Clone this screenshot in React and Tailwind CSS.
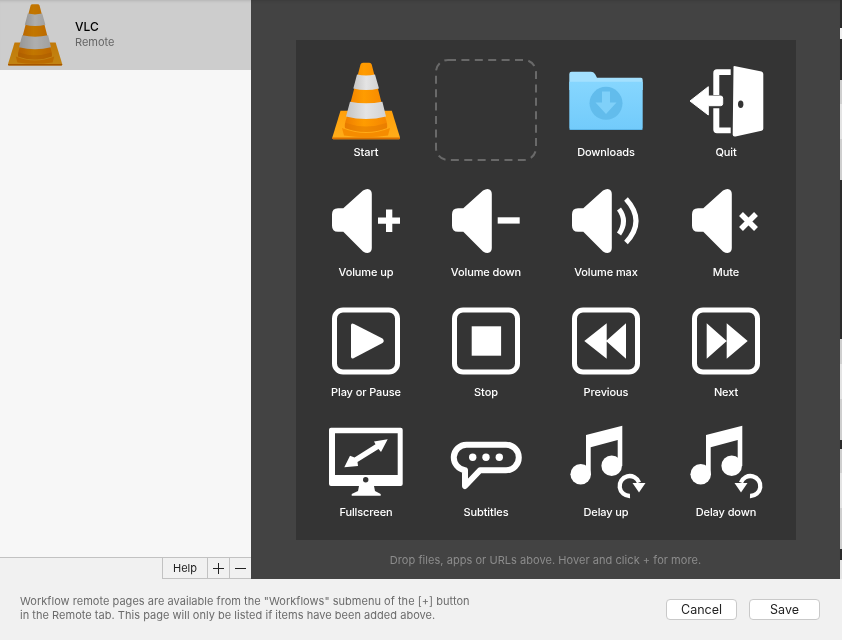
// App.jsx
import { useId } from "react";

const FONT = "font-['Inter','Liberation_Sans',sans-serif]";

// stray pixels of the window behind, visible down the right edge
const EDGE = [
    [28, "#2a2a2a"], [11, "#f0f0f0"], [41, "#2a2a2a"], [24, "#cfcfcf"], [35, "#e4e4e4"],
    [41, "#cfcfcf"], [160, "#2a2a2a"], [25, "#cfcfcf"], [35, "#e4e4e4"], [41, "#cfcfcf"],
    [9, "#2a2a2a"], [24, "#cfcfcf"], [35, "#e4e4e4"], [41, "#cfcfcf"], [11, "#2a2a2a"], [19, "#e4e4e4"],
];

function Cone({ className }) {
    const id = useId();
    return (
        <svg viewBox="0 0 80 80" className={className}>
            <defs>
                <linearGradient id={`${id}o`} x1="0" x2="1" y1="0" y2="0">
                    <stop offset="0" stopColor="#ee7d00" />
                    <stop offset="0.45" stopColor="#ff9c00" />
                    <stop offset="1" stopColor="#f58500" />
                </linearGradient>
                <linearGradient id={`${id}w`} x1="0" x2="1" y1="0" y2="0">
                    <stop offset="0" stopColor="#c4c4c4" />
                    <stop offset="0.5" stopColor="#e4e4e4" />
                    <stop offset="1" stopColor="#d2d2d2" />
                </linearGradient>
                <linearGradient id={`${id}p`} x1="0" x2="0" y1="0" y2="1">
                    <stop offset="0" stopColor="#ff9f0a" />
                    <stop offset="1" stopColor="#ffae1a" />
                </linearGradient>
            </defs>
            <path d="M14.5 50.7H65.8L74 77.5V78.3Q74 79.3 73 79.3H7.3Q6.3 79.3 6.3 78.3V77.5Z" fill={`url(#${id}p)`} />
            <path d="M6.3 77.6H74V78.3Q74 79.3 73 79.3H7.3Q6.3 79.3 6.3 78.3Z" fill="#d96f00" />
            <path d="M16 68Q40 78 64 68L62 75.5Q40 79 18 75.5Z" fill="#f58c00" />
            <path d="M34.5 4.5Q35 2.7 37 2.7H43.2Q45.2 2.7 45.7 4.5L59.5 58Q62 65 61 68Q40 76 19 68Q18 65 20.5 58Z" fill={`url(#${id}o)`} />
            <path d="M31 14.5Q40 16.5 49 14.5L53 28.5Q40 31.5 27.3 28.5Z" fill={`url(#${id}w)`} />
            <path d="M24 41.7Q40 45 56.4 41.7L60 56.5Q40 61.5 20 56.5Z" fill={`url(#${id}w)`} />
            <path d="M19.5 63Q40 70 60.5 63L61 68Q40 76 19 68Z" fill="#e07800" opacity="0.5" />
        </svg>
    );
}

function Folder() {
    const id = useId();
    return (
        <svg viewBox="0 0 80 80" className="size-20">
            <defs>
                <linearGradient id={id} x1="0" x2="0" y1="0" y2="1">
                    <stop offset="0" stopColor="#86d6fe" />
                    <stop offset="1" stopColor="#72cbfb" />
                </linearGradient>
            </defs>
            <path d="M3.3 14Q3.3 11.7 5.6 11.7H25Q27.5 11.7 29 14L31 17.7H75Q76.7 17.7 76.7 20V30H3.3Z" fill="#a3e0fe" />
            <path d="M3.3 21.7H76.7V68Q76.7 70 74.7 70H5.3Q3.3 70 3.3 68Z" fill={`url(#${id})`} />
            <path d="M3.3 69H76.7Q76.7 70 74.7 70H5.3Q3.3 70 3.3 69Z" fill="#5cb4e6" />
            <circle cx="40" cy="43.3" r="16.5" fill="#62bcec" />
            <path d="M36 31.5H44V42.5H50.5L40 54 29.5 42.5H36Z" fill="#7fd0f9" />
        </svg>
    );
}

function Glyph({ children }) {
    return (
        <svg viewBox="0 0 80 80" className="size-20 text-white" fill="currentColor">
            {children}
        </svg>
    );
}

const Speaker = () => (
    <path d="M12 28.3H17.3L37 10.5Q39.5 9 41.5 9Q45.8 9.5 45.8 14V68Q45.8 72.5 41.5 73Q39.5 73 37 71.5L17.3 51.7H12Q6 51.7 6 45.7V34.3Q6 28.3 12 28.3Z" />
);

const Frame = () => (
    <rect x="8.5" y="10" width="63" height="62" rx="8.5" fill="none" stroke="currentColor" strokeWidth="5" />
);

const Notes = () => (
    <>
        <path d="M20 15L56.3 5.7V46H51.7V20L24.7 27.3V55H20Z" />
        <circle cx="14.7" cy="54.3" r="10.3" />
        <circle cx="45.7" cy="45.7" r="10.3" />
    </>
);

function DropSlot() {
    return (
        <div className="h-[120px] pt-[19px] flex justify-center">
            <svg viewBox="0 0 102 102" className="w-[102px] h-[102px]">
                <rect x="1" y="1" width="100" height="100" rx="12" fill="none" stroke="#696969" strokeWidth="2" strokeDasharray="8 5.4" />
            </svg>
        </div>
    );
}

function Item({ label, children }) {
    return (
        <div className="h-[120px] pt-5 flex flex-col items-center">
            {children}
            <span className="mt-[5px] text-[11px] leading-[14px] font-medium tracking-[-0.1px] text-white">{label}</span>
        </div>
    );
}

export default function App() {
    return (
        <div className={`${FONT} w-[842px] h-[640px] flex flex-col bg-[#f1f1f1] overflow-hidden`}>
            <div className="h-[579px] flex">
                {/* left list */}
                <div className="w-[251px] flex flex-col bg-[#f7f7f7]">
                    <div className="h-[70px] flex items-center bg-[#cdcdcd] shadow-[inset_0_3px_3px_-2px_rgba(0,0,0,0.12)]">
                        <Cone className="ml-[3px] mb-[2px] size-16 mix-blend-multiply brightness-95" />
                        <div className="ml-2 mb-[2px] flex flex-col">
                            <span className="text-[12px] leading-[16px] font-medium text-black">VLC</span>
                            <span className="text-[11px] leading-[14px] text-[#666]">Remote</span>
                        </div>
                    </div>
                    <div className="flex-1" />
                    <div className="h-[22px] flex justify-end border-t border-[#c2c2c2] bg-[#f1f1f1]">
                        <div className="flex border-b border-l border-[#c2c2c2] text-[#222]">
                            <span className="w-[45px] text-center text-[11px] leading-[20px] border-r border-[#c2c2c2]">Help</span>
                            <span className="w-[22px] flex items-center justify-center border-r border-[#c2c2c2]">
                                <svg viewBox="0 0 11 11" className="w-[11px] h-[11px]" stroke="#222" strokeWidth="1" shapeRendering="crispEdges"><path d="M5.5 0V11M0 5.5H11" /></svg>
                            </span>
                            <span className="w-[21px] flex items-center justify-center">
                                <svg viewBox="0 0 11 11" className="w-[11px] h-[11px]" stroke="#222" strokeWidth="1" shapeRendering="crispEdges"><path d="M0 5.5H11" /></svg>
                            </span>
                        </div>
                    </div>
                </div>

                {/* dark drop area */}
                <div className="w-[589px] pt-10 bg-[#434343] shadow-[inset_0_3px_3px_-2px_rgba(0,0,0,0.12)]">
                    <div className="ml-[45px] w-[500px] h-[500px] px-[10px] grid grid-cols-4 content-start bg-[#343434]">
                        <Item label="Start"><Cone className="size-20" /></Item>
                        <DropSlot />
                        <Item label="Downloads"><Folder /></Item>
                        <Item label="Quit">
                            <Glyph>
                                <path d="M47.5 8Q46.7 5.6 49.5 6.2L75.5 11.5Q77.3 12 77.3 14V68.5Q77.3 70.3 75.5 70.8L49.5 76.5Q46.7 77 46.7 74.5Z" />
                                <ellipse cx="54.7" cy="44.3" rx="2.7" ry="3.7" fill="#343434" />
                                <path d="M44.7 9.3V15H33.3V35H27.3V13Q27.3 9.3 31 9.3ZM44.7 73.3V67.6H33.3V48.3H27.3V69.6Q27.3 73.3 31 73.3Z" />
                                <path d="M4 41L22.3 26.7V36H34.5Q36.7 36 36.7 38V43.7Q36.7 45.7 34.5 45.7H22.3V55Z" stroke="currentColor" strokeLinejoin="round" />
                            </Glyph>
                        </Item>

                        <Item label="Volume up">
                            <Glyph>
                                <Speaker />
                                <path d="M60 29.5H66.3V37.5H74V43.7H66.3V52H60V43.7H52V37.5H60Z" />
                            </Glyph>
                        </Item>
                        <Item label="Volume down">
                            <Glyph>
                                <Speaker />
                                <rect x="51.7" y="37.3" width="22" height="6.3" />
                            </Glyph>
                        </Item>
                        <Item label="Volume max">
                            <Glyph>
                                <Speaker />
                                <path d="M53 29Q62 41 53 54" fill="none" stroke="currentColor" strokeWidth="5" />
                                <path d="M60 19Q80 41 60 62.5" fill="none" stroke="currentColor" strokeWidth="5" />
                            </Glyph>
                        </Item>
                        <Item label="Mute">
                            <Glyph>
                                <Speaker />
                                <path d="M55 34L70 49M70 34L55 49" fill="none" stroke="currentColor" strokeWidth="5.5" />
                            </Glyph>
                        </Item>

                        <Item label="Play or Pause">
                            <Glyph>
                                <Frame />
                                <path d="M25 25.5Q25 22.5 28 24L56.5 38.5Q59 41 56.5 43L28 58Q25 59.5 25 56.5Z" />
                            </Glyph>
                        </Item>
                        <Item label="Stop">
                            <Glyph>
                                <Frame />
                                <rect x="25.7" y="26.3" width="29.4" height="29.4" />
                            </Glyph>
                        </Item>
                        <Item label="Previous">
                            <Glyph>
                                <Frame />
                                <path d="M18.3 41L40.7 23.3V58.7ZM40 41L60 23.3V58.7Z" />
                            </Glyph>
                        </Item>
                        <Item label="Next">
                            <Glyph>
                                <Frame />
                                <path d="M20.7 23.3L40.7 41 20.7 58.7ZM40.7 23.3L61.7 41 40.7 58.7Z" />
                            </Glyph>
                        </Item>

                        <Item label="Fullscreen">
                            <Glyph>
                                <path fillRule="evenodd" d="M5 7.7H74.7Q76.7 7.7 76.7 9.7V64Q76.7 66 74.7 66H48L49 71 54.7 74V75.7H25.7V74L32 71 33 66H5Q3 66 3 64V9.7Q3 7.7 5 7.7ZM9 13.3V55H71.7V13.3Z" />
                                <circle cx="39.7" cy="59.8" r="2.7" fill="#343434" />
                                <path d="M61.7 19.3L55 32 52.5 28.9 31.5 42 32 46 18.3 47.3 24 35.7 28.5 37.4 49.5 24.3 48 21.5Z" />
                            </Glyph>
                        </Item>
                        <Item label="Subtitles">
                            <Glyph>
                                <path d="M20.5 24.7H60A12.8 12.8 0 0 1 60 50.3H34L19 66V50.2A12.8 12.8 0 0 1 20.5 24.7Z" fill="none" stroke="currentColor" strokeWidth="6" strokeLinejoin="round" />
                                <circle cx="26.7" cy="37.3" r="3.7" />
                                <circle cx="40" cy="37.3" r="3.7" />
                                <circle cx="53.3" cy="37.3" r="3.7" />
                            </Glyph>
                        </Item>
                        <Item label="Delay up">
                            <Glyph>
                                <Notes />
                                <path d="M64 76A10 10 0 1 1 73 62.5" fill="none" stroke="currentColor" strokeWidth="4.3" />
                                <path d="M66.5 63H79.5L73 72.5Z" />
                            </Glyph>
                        </Item>
                        <Item label="Delay down">
                            <Glyph>
                                <Notes />
                                <path d="M64 76A10 10 0 1 0 55 62.5" fill="none" stroke="currentColor" strokeWidth="4.3" />
                                <path d="M61.5 63H48.5L55 72.5Z" />
                            </Glyph>
                        </Item>
                    </div>
                    <p className="mt-[13px] text-center text-[11px] leading-[14px] tracking-[0.05px] text-[#8c8c8c]">
                        Drop files, apps or URLs above. Hover and click + for more.
                    </p>
                </div>

                <div className="w-[2px] flex flex-col">
                    {EDGE.map(([h, color], i) => (
                        <div key={i} style={{ height: h, background: color }} />
                    ))}
                </div>
            </div>

            {/* footer */}
            <div className="flex-1 pl-5 pr-[22px] pt-5 flex items-start justify-between">
                <p className="mt-[-5px] text-[11px] leading-[14px] tracking-[0.03px] text-[#6b6b6b]">
                    Workflow remote pages are available from the "Workflows" submenu of the [+] button
                    <br />
                    in the Remote tab. This page will only be listed if items have been added above.
                </p>
                <div className="flex gap-3">
                    <button className="w-[71px] h-[21px] bg-white border border-[#c9c9c9] rounded text-[12.5px] leading-[19px] text-[#222]">Cancel</button>
                    <button className="w-[71px] h-[21px] bg-white border border-[#c9c9c9] rounded text-[12.5px] leading-[19px] text-[#222]">Save</button>
                </div>
            </div>
        </div>
    );
}
